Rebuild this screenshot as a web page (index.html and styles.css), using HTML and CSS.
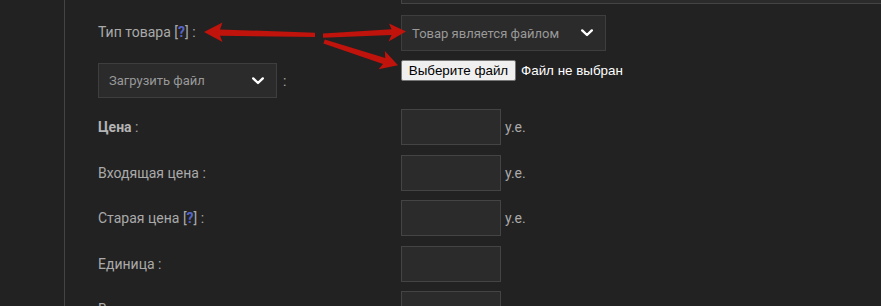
FILE: index.html
```html
<!DOCTYPE html>
<html>
	<head>
		<meta charset="utf-8">
		<title>Товар</title>
		<link rel="stylesheet" href="styles.css">
	</head>
	<body>
		<div class="page">
			<div class="side"></div>

			<div class="main">
				<form class="form">
					<!-- верхнее поле, обрезано -->
					<div class="row row_cut">
						<div class="label"></div>
						<div class="field">
							<input class="text text_wide" type="text" />
						</div>
					</div>

					<div class="row row_type">
						<div class="label">
							<div class="line">Тип товара <span class="hint">[<b>?</b>]</span> :</div>
							<div class="line_upload">
								<div class="select select_upload">
									<span>Загрузить файл</span>
									<svg class="chevron" width="12" height="8" viewBox="0 0 12 8"><polyline points="1.2,1.4 6,6 10.8,1.4" /></svg>
								</div>
								<span class="colon">:</span>
							</div>
						</div>
						<div class="field">
							<div class="select select_type">
								<span>Товар является файлом</span>
								<svg class="chevron" width="12" height="8" viewBox="0 0 12 8"><polyline points="1.2,1.4 6,6 10.8,1.4" /></svg>
							</div>
							<div class="file">
								<span class="file_btn">Выберите файл</span>
								<span class="file_name">Файл не выбран</span>
							</div>
						</div>
					</div>

					<div class="row">
						<div class="label"><b class="strong">Цена</b> :</div>
						<div class="field"><input class="text" type="text" /><span class="unit">у.е.</span></div>
					</div>

					<div class="row">
						<div class="label">Входящая цена :</div>
						<div class="field"><input class="text" type="text" /><span class="unit">у.е.</span></div>
					</div>

					<div class="row">
						<div class="label">Старая цена <span class="hint">[<b>?</b>]</span> :</div>
						<div class="field"><input class="text" type="text" /><span class="unit">у.е.</span></div>
					</div>

					<div class="row">
						<div class="label">Единица :</div>
						<div class="field"><input class="text" type="text" /></div>
					</div>

					<div class="row">
						<div class="label">Вес :</div>
						<div class="field"><input class="text" type="text" /></div>
					</div>
				</form>
			</div>

			<!-- стрелки поверх формы -->
			<svg class="arrows" width="881" height="306" viewBox="0 0 881 306">
				<polygon points="204,32 222.5,22.5 220,29.4 315,32.8 315,37 220,35.8 222.5,42" />
				<polygon points="406,31.5 389,23.5 391.5,29.2 323,33.4 323,37.8 391.5,35 388.5,41.5" />
				<polygon points="398,65.3 384.8,51 385.3,58 324.8,39.4 323.4,43.6 383,63.9 378.6,69.2" />
			</svg>
		</div>
	</body>
</html>
```

FILE: styles.css
```css
* {
	padding:0px;
	margin:0px;
	box-sizing:border-box;
}

body {
	background-color:#222222;
	overflow:hidden;

	font-family:Roboto, "Liberation Sans", sans-serif;
	font-size:14px;
	color:#aaaaaa;
}

.page {
	position:relative;
	display:flex;
	height:306px;
	overflow:hidden;
}

.side {
	flex:0 0 65px;
	border-right:1px #444444 solid;
}

.main {
	flex:1;
	overflow:hidden;
	padding-left:33px;
}

.row {
	display:grid;
	grid-template-columns:303px 1fr;
	align-items:start;
	margin-top:9.5px;
}
	.row_cut {
		margin-top:-32px;
	}
	.row_type {
		margin-top:11px;
	}
	.row_type + .row {
		margin-top:11px;
	}

.label {
	line-height:36px;
	white-space:nowrap;
}
	.row_type .line {
		line-height:35px;
	}
	.strong {
		font-weight:bold;
		color:#b4b4b4;
	}
	.hint b {
		color:#5664c8;
		font-weight:bold;
	}

.line_upload {
	display:flex;
	align-items:center;
	margin-top:13px;
}
	.colon {
		margin-left:6px;
		line-height:16px;
	}

.field {
	display:flex;
	flex-direction:column;
	align-items:flex-start;
}
	.row .field {
		flex-direction:row;
		align-items:center;
	}
	.row_type .field {
		flex-direction:column;
		align-items:flex-start;
	}

.text {
	display:block;
	width:100px;
	height:36px;

	background:#2b2b2b;
	border:1px #444444 solid;
	outline:none;
}
	.text_wide {
		width:620px;
	}

.unit {
	margin-left:4px;
}

.select {
	display:flex;
	align-items:center;
	justify-content:space-between;

	height:36px;
	padding:0px 12px 0px 10px;

	background:#2b2b2b;
	border:1px #3e3e3e solid;

	font-size:13px;
	color:#999999;
	white-space:nowrap;
}
	.select_type {
		width:205px;
	}
	.select_upload {
		width:179px;
		height:35px;
		padding-right:12px;
	}
	.chevron {
		display:block;
	}
	.chevron polyline {
		fill:none;
		stroke:#ffffff;
		stroke-width:2.4;
		stroke-linecap:round;
		stroke-linejoin:round;
	}

.file {
	display:flex;
	align-items:center;
	margin-top:9px;

	font-family:"Liberation Sans", Arial, sans-serif;
	font-size:13.4px;
}
	.file_btn {
		display:block;
		width:115px;
		height:21px;

		background:#efefef;
		border:1px #767676 solid;
		border-radius:2px;

		color:#000000;
		line-height:19px;
		text-align:center;
	}
	.file_name {
		margin-left:5px;
		color:#ffffff;
	}

.arrows {
	position:absolute;
	left:0px;
	top:0px;
	pointer-events:none;
}
	.arrows polygon {
		fill:#bf130c;
	}
```
